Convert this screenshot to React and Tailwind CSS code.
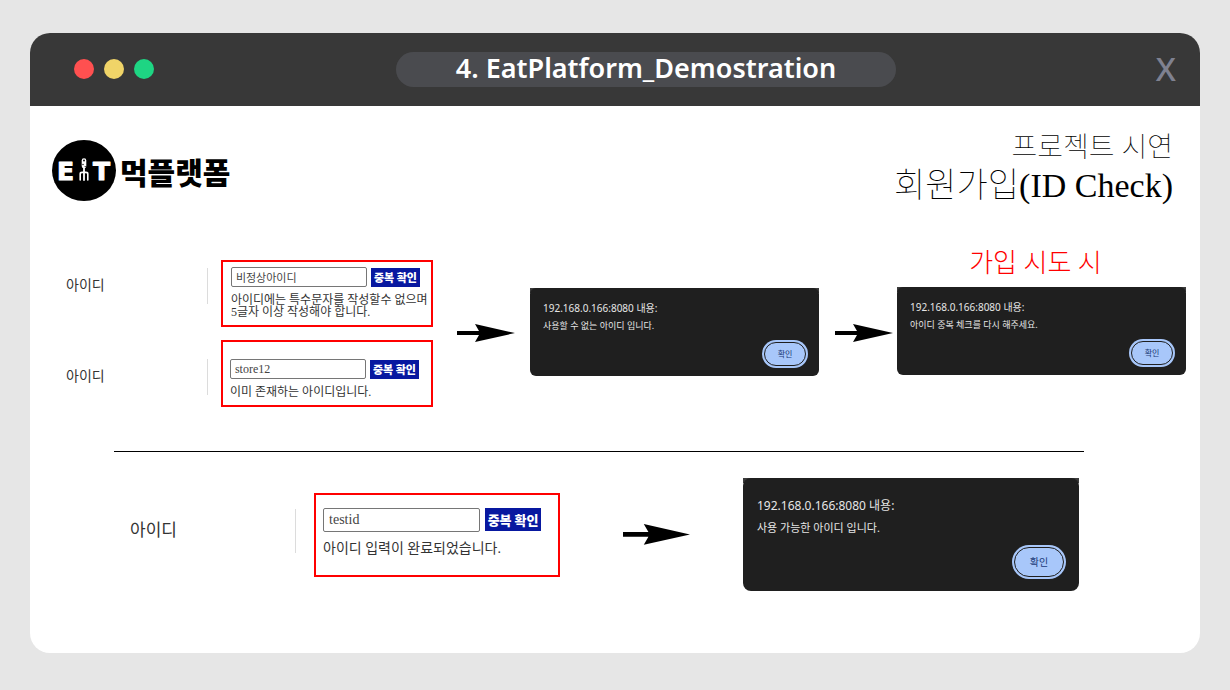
import React from "react";

const SERIF = "font-['Liberation_Serif','Noto_Sans_CJK_KR',serif]";
const SANS = "font-['Noto_Sans','Noto_Sans_CJK_KR',sans-serif]";
const KOREAN = "font-['Noto_Sans_CJK_KR',sans-serif]";

function Logo() {
  return (
    <a href="#" className="flex items-center gap-1 text-black">
      <svg viewBox="0 0 64 61" className="h-[61px] w-16" aria-hidden="true">
        <ellipse cx="32" cy="30.5" rx="32" ry="30.5" fill="#000" />
        <g
          fill="#fff"
          stroke="#fff"
          strokeWidth="1"
          strokeLinejoin="round"
          fontFamily="DejaVu Sans"
          fontWeight="700"
          fontSize="25"
        >
          <text x="5" y="40">E</text>
          <text x="41" y="40">T</text>
        </g>
        <g stroke="#fff" fill="none" strokeLinecap="round" strokeLinejoin="round">
          <path d="M32 20.5v5.5" strokeWidth="4.6" />
          <path d="M32 27v13" strokeWidth="1.8" />
          <path d="M28.2 40v-6q0-1.6 1.8-1.6h4q1.8 0 1.8 1.6v6" strokeWidth="1.6" />
        </g>
        <g fill="#000">
          <circle cx="32" cy="20.5" r="0.9" />
          <circle cx="31" cy="24.5" r="0.7" />
          <circle cx="33.2" cy="26.5" r="0.6" />
        </g>
      </svg>
      <span className={`${KOREAN} text-[30px] leading-8 font-black`}>먹플랫폼</span>
    </a>
  );
}

function Arrow({ className }) {
  return (
    <svg viewBox="0 0 58 18" className={className} aria-hidden="true">
      <path d="M0 7h22L18 0 58 9 18 18l4-7H0z" fill="#000" />
    </svg>
  );
}

function Field({ id, value, children, large, low }) {
  return (
    <div className="flex items-start">
      <div
        className={`flex flex-1 items-center border-r border-[#dcdcdc] text-[#333] ${
          large ? "mt-4 mr-[18px] h-11 text-[17px]" : "mr-[13px] h-9 text-sm"
        } ${large ? "" : low ? "mt-[19px]" : "mt-2"}`}
      >
        <label htmlFor={id}>아이디</label>
      </div>
      <div
        className={`border-2 border-[#ff0000] ${
          large
            ? "h-[84px] w-[57.2%] px-[7px] pt-[13px]"
            : low
              ? "h-[67px] w-[57.8%] px-[7px] pt-[17px]"
              : "h-[67px] w-[57.8%] px-2 pt-[5px]"
        }`}
      >
        <div className={`flex items-center ${large ? "gap-[5px]" : "gap-1"}`}>
          <input
            id={id}
            type="text"
            defaultValue={value}
            className={`min-w-0 rounded-xs border border-[#767676] bg-white text-[#444] outline-none ${
              large ? "h-6 w-[157px] px-[5px] text-sm" : `h-5 w-[136px] px-1 ${low ? "text-xs" : "text-[11px]"}`
            }`}
          />
          <button
            type="button"
            className={`${KOREAN} shrink-0 bg-[#0818a0] text-center font-black whitespace-nowrap text-white ${
              large ? "h-[23px] w-14 text-[13px] leading-[23px]" : "h-[19px] w-[49px] text-[11px] leading-[19px]"
            }`}
          >
            중복 확인
          </button>
        </div>
        <p
          className={`whitespace-nowrap text-[#333] ${
            large ? "mt-[9px] text-sm leading-4" : "mt-[7px] text-xs leading-3"
          }`}
        >
          {children}
        </p>
      </div>
    </div>
  );
}

function Alert({ message, large }) {
  return (
    <div className="bg-[linear-gradient(#3c3c3c_5px,transparent_5px)]">
      <div
        role="alertdialog"
        aria-label={message}
        className={`${SANS} flex flex-col bg-[#1f1f1f] text-[#e6e6e6] ${
          large ? "h-[113px] rounded-lg px-[14px] pt-[19px] pb-3" : "h-[88px] rounded-md px-[13px] pt-3 pb-[10px]"
        }`}
      >
        <p className={large ? "text-xs leading-[18px]" : "text-[10px] leading-4"}>
          192.168.0.166:8080 내용:
        </p>
        <p className={large ? "mt-1 text-[11px] leading-[18px]" : "mt-[3px] text-[9px] leading-[14px]"}>
          {message}
        </p>
        <button
          type="button"
          className={`mt-auto self-end rounded-full border border-[#1f1f1f] bg-[#a8c7fa] text-[#1b3a78] ring-2 ring-[#a8c7fa] ${
            large ? "mr-px mb-[2px] h-[30px] w-[50px] text-[10px]" : "h-6 w-[42px] text-[8px]"
          }`}
        >
          확인
        </button>
      </div>
    </div>
  );
}

export default function App() {
  return (
    <div className="min-h-screen bg-[#e6e6e6] px-[30px] pt-[33px] pb-[37px]">
      <div className="overflow-hidden rounded-[20px] bg-white">
        <header
          className={`${SANS} grid h-[73px] grid-cols-[322fr_500fr_280fr] items-center bg-[#383838] pr-6 pb-px pl-11`}
        >
          <div className="flex gap-[10px]">
            <span className="size-5 rounded-full bg-[#ff5050]" />
            <span className="size-5 rounded-full bg-[#f0d468]" />
            <span className="size-5 rounded-full bg-[#1ed583]" />
          </div>
          <h1 className="h-[35px] rounded-full bg-[#4a4b4f] text-center text-[27px] leading-8 font-semibold whitespace-nowrap text-white">
            4. EatPlatform_Demostration
          </h1>
          <button
            type="button"
            aria-label="닫기"
            className="justify-self-end text-[33px] leading-9 font-medium text-[#7f8190]"
          >
            X
          </button>
        </header>

        <main className={`${SERIF} pb-[62px]`}>
          <div className="flex items-start justify-between pt-[26px] pr-[27px] pl-[22px]">
            <div className="pt-2">
              <Logo />
            </div>
            <div className="text-right font-thin text-black">
              <p className="text-[28px] leading-8">프로젝트 시연</p>
              <h2 className="text-[34px] leading-[44px]">회원가입(ID Check)</h2>
            </div>
          </div>

          <section className="mt-10 grid grid-cols-[367fr_97fr_289fr_78fr_289fr] items-end pr-[14px] pl-9">
            <div className="flex flex-col gap-[13px]">
              <Field id="invalid-id" value="비정상아이디">
                아이디에는 특수문자를 작성할수 없으며
                <br />
                5글자 이상 작성해야 합니다.
              </Field>
              <Field id="taken-id" value="store12" low>
                이미 존재하는 아이디입니다.
              </Field>
            </div>
            <Arrow className="mb-[65px] ml-6 w-[58px]" />
            <div className="mb-[31px]">
              <Alert message="사용할 수 없는 아이디 입니다." />
            </div>
            <Arrow className="mb-[65px] ml-4 w-[58px]" />
            <div className="mb-8">
              <h3 className="mb-[7px] pr-3 text-center text-[26px] leading-8 font-light text-[#f00]">가입 시도 시</h3>
              <Alert message="아이디 중복 체크를 다시 해주세요." />
            </div>
          </section>

          <hr className="mt-11 mr-[116px] ml-[84px] border-black" />

          <section className="mt-[26px] grid grid-cols-[430fr_183fr_336fr] items-center pr-[121px] pl-[100px]">
            <Field id="valid-id" value="testid" large>
              아이디 입력이 완료되었습니다.
            </Field>
            <Arrow className="ml-[63px] w-[67px]" />
            <Alert message="사용 가능한 아이디 입니다." large />
          </section>
        </main>
      </div>
    </div>
  );
}
